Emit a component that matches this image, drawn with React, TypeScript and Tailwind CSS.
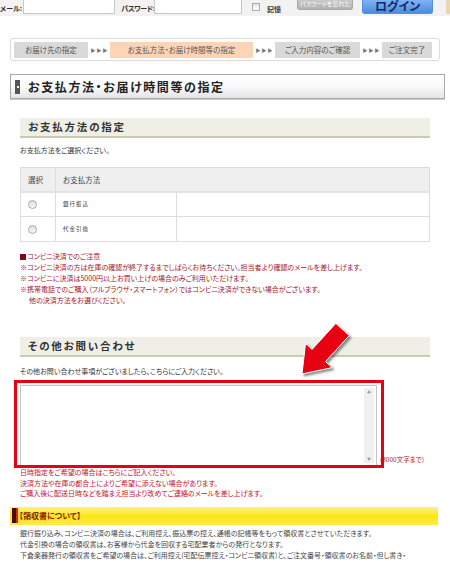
const jp = "font-['Noto_Sans_CJK_JP','Noto_Sans',sans-serif] [font-feature-settings:'palt']";

const steps = [
  { label: 'お届け先の指定', active: false, w: 'w-[74px]' },
  { label: 'お支払方法・お届け時間等の指定', active: true, w: 'w-[143px]' },
  { label: 'ご入力内容のご確認', active: false, w: 'w-[85px]' },
  { label: 'ご注文完了', active: false, w: 'w-[50px]' },
];

const konbiniNotes = [
  '※コンビニ決済の方は在庫の確認が終了するまでしばらくお待ちください。担当者より確認のメールを差し上げます。',
  '※コンビニに決済は5000円以上お買い上げの場合のみご利用いただけます。',
  '※携帯電話でのご購入（フルブラウザ・スマートフォン）ではコンビニ決済ができない場合がございます。',
];

const dateNotes = [
  '日時指定をご希望の場合はこちらにご記入ください。',
  '決済方法や在庫の都合上によりご希望に添えない場合があります。',
  'ご購入後に配送日時などを踏まえ担当より改めてご連絡のメールを差し上げます。',
];

const receiptText = [
  '銀行振り込み、コンビニ決済の場合は、ご利用控え、振込票の控え、通帳の記帳等をもって領収書とさせていただきます。',
  '代金引換の場合の領収書は、お客様から代金を回収する宅配業者からの発行となります。',
  '下倉楽器発行の領収書をご希望の場合は、ご利用控え(宅配伝票控え・コンビニ領収書)と、ご注文番号・領収書のお名前・但し書き・',
];

function Arrows() {
  return (
    <div className="flex w-[14px] items-center justify-center gap-[1px] text-[5px] leading-none text-[#777]">
      <span>▶</span>
      <span>▶</span>
      <span>▶</span>
    </div>
  );
}

function SectionHeading({ title }: { title: string }) {
  return (
    <div className="mx-[20px] flex h-[20px] items-center border-b-2 border-[#c9cab0] bg-[#efefe8] pl-[8px]">
      <span className="text-[10.5px] font-bold tracking-[1.8px] text-[#333]">{title}</span>
    </div>
  );
}

function Radio() {
  return (
    <span className="block h-[9px] w-[9px] rounded-full border border-[#aaa] bg-gradient-to-b from-[#ddd] to-[#fafafa]" />
  );
}

export default function App() {
  return (
    <div className={`relative h-[563px] w-[450px] overflow-hidden bg-white ${jp}`}>
      {/* login bar */}
      <div className="flex h-[16px] items-start whitespace-nowrap bg-[#f2f2f2] text-[7px] text-[#333]">
        <span className="mt-[3px] w-[23px] font-bold">メール:</span>
        <div className="h-[14px] w-[94px] border border-t-0 border-[#c8c8c8] bg-white" />
        <span className="ml-[6px] mt-[3px] w-[33px] font-bold tracking-[-0.3px]">パスワード:</span>
        <div className="h-[14px] w-[89px] border border-t-0 border-[#c8c8c8] bg-white" />
        <span className="ml-[10px] mt-[3px] h-[8px] w-[8px] border border-[#aaa] bg-gradient-to-b from-[#e6e6e6] to-white" />
        <span className="ml-[7px] mt-[4px] font-bold">記憶</span>
        <div className="ml-[16px] flex h-[10px] w-[57px] items-end justify-center rounded-b-[3px] border border-t-0 border-[#a8a8a8] bg-gradient-to-b from-[#c9c9c9] to-[#b3b3b3] pb-[1px] text-[6px] text-white">
          パスワードを忘れた
        </div>
        <div className="ml-[9px] flex h-[14px] w-[72px] items-end justify-center overflow-hidden rounded-b-[3px] border border-t-0 border-[#5b8ed8] bg-gradient-to-b from-[#7fb2f2] to-[#4d8be0] text-[12px] font-bold leading-[14px] text-[#102a6a]">
          <span className="-mt-[6px]">ログイン</span>
        </div>
        <div className="ml-[13px] h-[14px] w-[4px] bg-[#e9d6b5]" />
      </div>

      {/* steps */}
      <div className="mx-[10px] mt-[22px] flex h-[23px] items-center gap-[4px] rounded-[3px] border border-[#dcdcdc] px-[3px] text-[7.5px] text-[#555]">
        {steps.map((s, i) => (
          <div key={s.label} className="flex items-center gap-[4px]">
            {i > 0 && <Arrows />}
            <div
              className={`flex h-[16px] ${s.w} items-center justify-center ${
                s.active ? 'bg-[#fdd5b5]' : 'bg-[#d9d9d9]'
              }`}
            >
              {s.label}
            </div>
          </div>
        ))}
      </div>

      {/* page title */}
      <div className="ml-[10px] mr-[5px] mt-[13px] flex h-[25px] items-center border border-[#a9a9a9] bg-gradient-to-b from-white via-[#fafafa] to-[#e4e4ea] shadow-[0_1px_0_#ccc]">
        <span className="ml-[4px] flex h-[14px] w-[5px] items-center justify-center bg-[#555]">
          <span className="h-[2px] w-[2px] bg-white" />
        </span>
        <span className="ml-[8px] text-[12px] font-bold tracking-[1.6px] text-[#222]">
          お支払方法・お届け時間等の指定
        </span>
      </div>

      {/* payment method */}
      <div className="mt-[19px]">
        <SectionHeading title="お支払方法の指定" />
      </div>
      <p className="ml-[20px] mt-[7px] text-[7px] leading-[10px] text-[#333]">お支払方法をご選択ください。</p>

      <div className="mx-[20px] mt-[12px] border border-[#ddd] text-[#444]">
        <div className="flex h-[25px] items-center border-b-2 border-[#e4e4e4] bg-[#efefef] text-[7.5px]">
          <div className="flex h-full w-[35px] items-center border-r border-[#ddd] pl-[7px]">選択</div>
          <div className="pl-[7px]">お支払方法</div>
        </div>
        {['銀行振込', '代金引換'].map((m, i) => (
          <div key={m} className={`flex h-[24px] ${i === 0 ? 'border-b border-[#ddd]' : ''}`}>
            <div className="flex w-[35px] items-center border-r border-[#ddd] pl-[7px]">
              <Radio />
            </div>
            <div className="flex w-[121px] items-center border-r border-[#ddd] pl-[7px] text-[5.5px] tracking-[1px] text-[#333]">
              {m}
            </div>
            <div className="flex-1" />
          </div>
        ))}
      </div>

      {/* konbini notes */}
      <div className="ml-[20px] mt-[9px] text-[7px] leading-[11px] text-[#a3162b]">
        <p className="flex items-center">
          <span className="mr-[1px] inline-block h-[6px] w-[6px] bg-[#7a0b1a]" />
          コンビニ決済でのご注意
        </p>
        {konbiniNotes.map((n) => (
          <p key={n} className="whitespace-nowrap">{n}</p>
        ))}
        <p className="pl-[9px]">他の決済方法をお選びください。</p>
      </div>

      {/* other inquiries */}
      <div className="mt-[31px]">
        <SectionHeading title="その他お問い合わせ" />
      </div>
      <p className="ml-[20px] mt-[9px] text-[7px] leading-[10px] text-[#333]">
        その他お問い合わせ事項がございましたら、こちらにご入力ください。
      </p>

      <div className="ml-[20px] mt-[9px] flex items-end">
        <div className="flex h-[81px] w-[357px] border border-[#c4c4c4] bg-white p-[2px]">
          <div className="flex-1" />
          <div className="flex w-[10px] flex-col items-center justify-between bg-[#f0f0f0] py-[2px] text-[4px] leading-none text-[#999]">
            <span>▲</span>
            <span>▼</span>
          </div>
        </div>
        <span className="mb-[1px] ml-[2px] whitespace-nowrap text-[6.5px] text-[#b0182a]">（3000文字まで）</span>
      </div>

      <div className="ml-[20px] mt-[1px] text-[7px] leading-[10.5px] text-[#c4122a]">
        {dateNotes.map((n) => (
          <p key={n}>{n}</p>
        ))}
      </div>

      {/* red annotation frame */}
      <div className="absolute left-[14px] top-[380px] h-[88px] w-[370px] border-[3px] border-[#e60012]" />

      {/* red annotation arrow */}
      <svg
        className="absolute left-[290px] top-[315px] drop-shadow-[2px_2px_1px_rgba(0,0,0,0.45)]"
        width="70"
        height="65"
        viewBox="290 315 70 65"
      >
        <polygon
          points="335.8,323.4 349.2,335.6 325.5,361.6 332.1,367.6 302,374 305.5,343.4 312.1,349.4"
          fill="#e60012"
          stroke="#fff"
          strokeWidth="1"
        />
      </svg>

      {/* receipt */}
      <div className="ml-[10px] mr-[12px] mt-[8px] flex h-[18px] items-center bg-gradient-to-b from-[#fff27a] via-[#ffe600] to-[#ffe94a]">
        <span className="ml-[2px] h-[15px] w-[4px] bg-[#4d0a0a]" />
        <span className="h-[15px] w-[2px] bg-[#d8281a]" />
        <span className="ml-[1px] text-[8px] font-bold text-[#8b1c05]">【領収書について】</span>
      </div>
      <div className="ml-[20px] mt-[3px] text-[7px] leading-[11px] text-[#444]">
        {receiptText.map((t) => (
          <p key={t} className="whitespace-nowrap">{t}</p>
        ))}
      </div>
    </div>
  );
}
